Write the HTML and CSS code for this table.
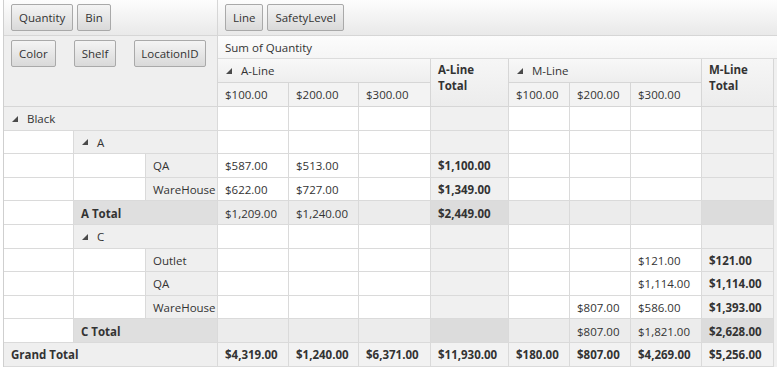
FILE: index.html
```html
<!DOCTYPE html>
<html>
<head>
<meta charset="utf-8">
<link rel="stylesheet" href="styles.css">
</head>
<body>
<div class="pivot">
  <div class="topbar">
    <div class="zone filters"><span class="btn">Quantity</span><span class="btn">Bin</span></div>
    <div class="zone colfields"><span class="btn">Line</span><span class="btn">SafetyLevel</span></div>
  </div>
  <div class="grid">
    <div class="rowfields"><span class="btn">Color</span><span class="btn">Shelf</span><span class="btn">LocationID</span></div>
    <div class="measure">Sum of Quantity</div>
    <div class="h grp a"><svg class="tri" viewBox="0 0 7 7"><polygon points="7,0 7,7 0,7"/></svg>A-Line</div>
    <div class="h tot at">A-Line Total</div>
    <div class="h grp m"><svg class="tri" viewBox="0 0 7 7"><polygon points="7,0 7,7 0,7"/></svg>M-Line</div>
    <div class="h tot mt">M-Line Total</div>
    <div class="h fillh"></div>
    <div class="h v">$100.00</div><div class="h v">$200.00</div><div class="h v">$300.00</div>
    <div class="h v">$100.00</div><div class="h v">$200.00</div><div class="h v">$300.00</div>

    <!-- Black -->
    <div class="c rh s3"><svg class="tri" viewBox="0 0 7 7"><polygon points="7,0 7,7 0,7"/></svg>Black</div>
    <div class="c"></div><div class="c"></div><div class="c"></div><div class="c ct"></div><div class="c"></div><div class="c"></div><div class="c"></div><div class="c ct"></div><div class="f"></div>
    <!-- A -->
    <div class="c blank"></div><div class="c rh s2"><svg class="tri" viewBox="0 0 7 7"><polygon points="7,0 7,7 0,7"/></svg>A</div>
    <div class="c"></div><div class="c"></div><div class="c"></div><div class="c ct"></div><div class="c"></div><div class="c"></div><div class="c"></div><div class="c ct"></div><div class="f"></div>
    <!-- QA -->
    <div class="c blank"></div><div class="c blank"></div><div class="c rh">QA</div>
    <div class="c">$587.00</div><div class="c">$513.00</div><div class="c"></div><div class="c ct b">$1,100.00</div><div class="c"></div><div class="c"></div><div class="c"></div><div class="c ct"></div><div class="f"></div>
    <!-- WareHouse -->
    <div class="c blank"></div><div class="c blank"></div><div class="c rh">WareHouse</div>
    <div class="c">$622.00</div><div class="c">$727.00</div><div class="c"></div><div class="c ct b">$1,349.00</div><div class="c"></div><div class="c"></div><div class="c"></div><div class="c ct"></div><div class="f"></div>
    <!-- A Total -->
    <div class="c blank"></div><div class="c rt s2 b">A Total</div>
    <div class="c tr">$1,209.00</div><div class="c tr">$1,240.00</div><div class="c tr"></div><div class="c tx b">$2,449.00</div><div class="c tr"></div><div class="c tr"></div><div class="c tr"></div><div class="c tx"></div><div class="f"></div>
    <!-- C -->
    <div class="c blank"></div><div class="c rh s2"><svg class="tri" viewBox="0 0 7 7"><polygon points="7,0 7,7 0,7"/></svg>C</div>
    <div class="c"></div><div class="c"></div><div class="c"></div><div class="c ct"></div><div class="c"></div><div class="c"></div><div class="c"></div><div class="c ct"></div><div class="f"></div>
    <!-- Outlet -->
    <div class="c blank"></div><div class="c blank"></div><div class="c rh">Outlet</div>
    <div class="c"></div><div class="c"></div><div class="c"></div><div class="c ct"></div><div class="c"></div><div class="c"></div><div class="c">$121.00</div><div class="c ct b">$121.00</div><div class="f"></div>
    <!-- QA -->
    <div class="c blank"></div><div class="c blank"></div><div class="c rh">QA</div>
    <div class="c"></div><div class="c"></div><div class="c"></div><div class="c ct"></div><div class="c"></div><div class="c"></div><div class="c">$1,114.00</div><div class="c ct b">$1,114.00</div><div class="f"></div>
    <!-- WareHouse -->
    <div class="c blank"></div><div class="c blank"></div><div class="c rh">WareHouse</div>
    <div class="c"></div><div class="c"></div><div class="c"></div><div class="c ct"></div><div class="c"></div><div class="c">$807.00</div><div class="c">$586.00</div><div class="c ct b">$1,393.00</div><div class="f"></div>
    <!-- C Total -->
    <div class="c blank"></div><div class="c rt s2 b">C Total</div>
    <div class="c tr"></div><div class="c tr"></div><div class="c tr"></div><div class="c tx"></div><div class="c tr"></div><div class="c tr">$807.00</div><div class="c tr">$1,821.00</div><div class="c tx b">$2,628.00</div><div class="f"></div>
    <!-- Grand Total -->
    <div class="c gt s3 b">Grand Total</div>
    <div class="c g b">$4,319.00</div><div class="c g b">$1,240.00</div><div class="c g b">$6,371.00</div><div class="c g b">$11,930.00</div><div class="c g b">$180.00</div><div class="c g b">$807.00</div><div class="c g b">$4,269.00</div><div class="c g b">$5,256.00</div><div class="f"></div>
  </div>
</div>
</body>
</html>
```

FILE: styles.css
```css
html, body {
  margin: 0;
  padding: 0;
  background: #ffffff;
}
body {
  font-family: "Open Sans", "Liberation Sans", sans-serif;
  font-size: 11.5px;
  color: #333333;
}
.pivot {
  margin-left: 3px;
  border-left: 1px solid #cfcfcf;
  width: 773px;
  overflow: hidden;
}
.topbar {
  display: flex;
  height: 36px;
  box-sizing: border-box;
  border-bottom: 1px solid #d6d6d6;
  background: linear-gradient(#fdfdfd, #e9e9e9);
}
.zone {
  display: flex;
  align-items: center;
  gap: 4px;
}
.filters {
  width: 214px;
  box-sizing: border-box;
  padding-left: 7px;
  border-right: 1px solid #d6d6d6;
}
.colfields {
  padding-left: 7px;
}
.btn {
  display: inline-flex;
  align-items: center;
  height: 27px;
  box-sizing: border-box;
  padding: 0 7px;
  border: 1px solid #a9a9a9;
  border-radius: 2px;
  background: linear-gradient(#f4f4f4, #d9d9d9);
  color: #333;
  white-space: nowrap;
}
.grid {
  display: grid;
  grid-template-columns: 70px 72px 72px 71px 70px 72px 78px 61px 61px 71px 72px 1fr;
  grid-template-rows: 23px 24px 24px;
  grid-auto-rows: 23.6px;
  background: #f0f0f0;
}
.rowfields {
  grid-column: 1 / 4;
  grid-row: 1 / 4;
  display: flex;
  align-items: flex-start;
  gap: 18px;
  padding: 4px 7px 0;
  background: #efefef;
  border-right: 1px solid #d6d6d6;
  border-bottom: 1px solid #d6d6d6;
}
.rowfields .btn:last-child {
  padding: 0 6px;
}
.measure {
  grid-column: 4 / 13;
  grid-row: 1;
  display: flex;
  align-items: center;
  padding-left: 7px;
  background: linear-gradient(#fcfcfc, #f5f5f5);
  border-bottom: 1px solid #dcdcdc;
}
.h {
  box-sizing: border-box;
  display: flex;
  align-items: center;
  padding-left: 7px;
  white-space: nowrap;
  background: linear-gradient(#f8f8f8, #eeeeee);
  border-right: 1px solid #d6d6d6;
  border-bottom: 1px solid #d6d6d6;
}
.grp { grid-row: 2; }
.a { grid-column: 4 / 7; }
.m { grid-column: 8 / 11; }
.tot {
  grid-row: 2 / 4;
  align-items: flex-start;
  white-space: normal;
  font-weight: bold;
  line-height: 16px;
  padding-top: 3px;
  padding-right: 10px;
  background: linear-gradient(#f6f6f6, #ececec);
}
.at { grid-column: 7; }
.mt { grid-column: 11; }
.fillh {
  grid-column: 12;
  grid-row: 2 / 4;
  background: #f0f0f0;
  border-right: none;
}
.v {
  grid-row: 3;
  background: #f3f3f3;
}
.tri {
  width: 6px;
  height: 6px;
  fill: #4a4a4a;
  margin: 0 9px 0 1px;
  flex: none;
}
.c {
  box-sizing: border-box;
  display: flex;
  align-items: center;
  padding-left: 7px;
  padding-top: 1px;
  white-space: nowrap;
  overflow: hidden;
  background: #ffffff;
  border-right: 1px solid #dadada;
  border-bottom: 1px solid #dadada;
}
.s2 { grid-column: span 2; }
.s3 { grid-column: span 3; }
.rh { background: #efefef; }
.blank { background: #ffffff; }
.ct { background: #f0f0f0; }
.rt { background: #dfdfdf; }
.tr { background: #ececec; }
.tx { background: #dcdcdc; }
.gt { background: #efefef; padding-left: 7px; }
.g { background: #f2f2f2; }
.b { font-weight: bold; }
.f { background: #f0f0f0; }
```
